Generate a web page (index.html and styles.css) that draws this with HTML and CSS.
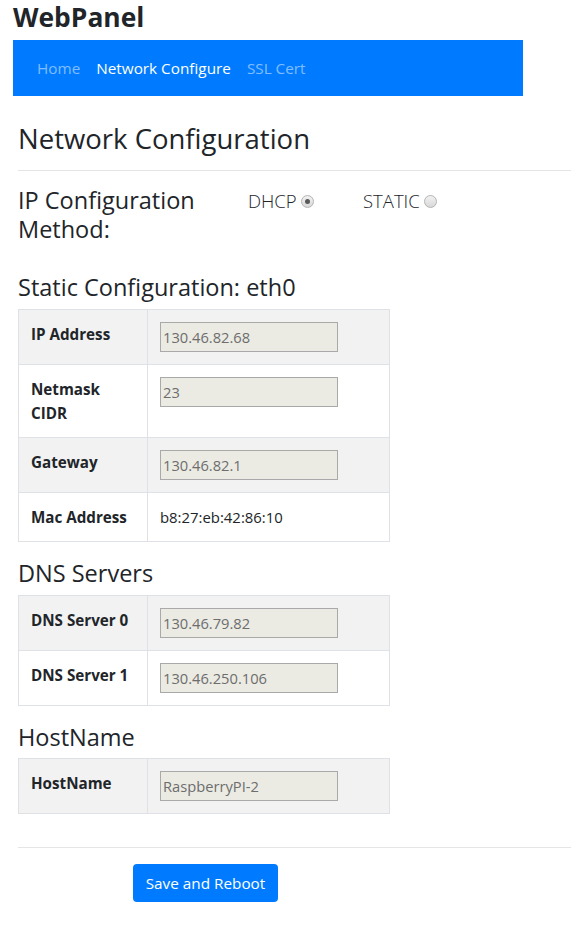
FILE: index.html
```html
<!DOCTYPE html>
<html lang="en">
<head>
<meta charset="utf-8">
<title>WebPanel - Network Configure</title>
<link rel="stylesheet" href="styles.css">
</head>
<body>
<h1 class="brand">WebPanel</h1>
<nav class="navbar">
  <a class="nav-link" href="#">Home</a>
  <a class="nav-link active" href="#">Network Configure</a>
  <a class="nav-link" href="#">SSL Cert</a>
</nav>
<main class="main">
  <h2 class="page-title">Network Configuration</h2>
  <hr class="rule">
  <div class="method-row">
    <h3 class="method-title">IP Configuration Method:</h3>
    <label class="method-option">DHCP <input class="radio" type="radio" name="method" checked></label>
    <label class="method-option">STATIC <input class="radio" type="radio" name="method"></label>
  </div>

  <h3 class="section-title">Static Configuration: eth0</h3>
  <table class="cfg-table">
    <tr class="odd"><th>IP Address</th><td><input class="field" type="text" value="130.46.82.68" disabled></td></tr>
    <tr><th>Netmask CIDR</th><td><input class="field" type="text" value="23" disabled></td></tr>
    <tr class="odd"><th>Gateway</th><td><input class="field" type="text" value="130.46.82.1" disabled></td></tr>
    <tr><th>Mac Address</th><td class="plain">b8:27:eb:42:86:10</td></tr>
  </table>

  <h3 class="section-title">DNS Servers</h3>
  <table class="cfg-table">
    <tr class="odd"><th>DNS Server 0</th><td><input class="field" type="text" value="130.46.79.82" disabled></td></tr>
    <tr><th>DNS Server 1</th><td><input class="field" type="text" value="130.46.250.106" disabled></td></tr>
  </table>

  <h3 class="section-title">HostName</h3>
  <table class="cfg-table">
    <tr class="odd"><th>HostName</th><td><input class="field" type="text" value="RaspberryPI-2" disabled></td></tr>
  </table>

  <hr class="rule rule-bottom">
  <div class="actions">
    <button class="btn-primary" type="button">Save and Reboot</button>
  </div>
</main>
</body>
</html>
```
FILE: styles.css
```css
html, body {
  margin: 0;
  padding: 0;
  background: #fff;
}
body {
  font-family: "Open Sans", "Noto Sans", sans-serif;
  color: #212529;
  font-size: 15.2px;
  line-height: 24px;
}
.brand {
  margin: 0;
  padding-left: 13px;
  font-size: 26.4px;
  line-height: 34px;
  font-weight: 700;
}
.navbar {
  margin: 6px 0 0 13px;
  width: 510px;
  height: 56px;
  box-sizing: border-box;
  padding: 0 16px;
  background: #007bff;
  display: flex;
  align-items: center;
}
.nav-link {
  padding: 0 8px;
  color: rgba(255, 255, 255, 0.5);
  text-decoration: none;
  font-size: 15.3px;
  line-height: 24px;
}
.nav-link.active {
  color: #fff;
}
.main {
  padding-left: 18px;
}
.page-title {
  margin: 26px 0 0;
  font-size: 27.5px;
  line-height: 34px;
  font-weight: 500;
}
.rule {
  border: 0;
  border-top: 1px solid rgba(0, 0, 0, 0.1);
  margin: 14px 0 15px;
}
.method-row {
  display: flex;
  align-items: flex-start;
  margin-bottom: 30px;
}
.method-title {
  margin: 0;
  width: 215px;
  margin-right: 15px;
  font-size: 23.5px;
  line-height: 28.5px;
  font-weight: 500;
}
.method-option {
  width: 115px;
  display: flex;
  align-items: center;
  gap: 4px;
  font-size: 18.5px;
  font-weight: 300;
  line-height: 28px;
  margin-top: 1px;
}
.radio {
  -webkit-appearance: none;
  appearance: none;
  margin: 0;
  width: 13px;
  height: 13px;
  border-radius: 50%;
  border: 1px solid #b4b4b4;
  background: linear-gradient(#f2f2f2, #d8d8d8);
  box-sizing: border-box;
  position: relative;
}
.radio:checked::after {
  content: "";
  position: absolute;
  left: 3px;
  top: 3px;
  width: 5px;
  height: 5px;
  border-radius: 50%;
  background: #595959;
}
.section-title {
  margin: 0 0 7px;
  font-size: 23.5px;
  line-height: 28.8px;
  font-weight: 500;
}
.cfg-table {
  border-collapse: collapse;
  table-layout: fixed;
  width: 372px;
  margin-bottom: 17px;
}
.cfg-table th,
.cfg-table td {
  border: 1px solid #dee2e6;
  padding: 12px;
  vertical-align: top;
  text-align: left;
  line-height: 24px;
}
.cfg-table th {
  width: 104px;
  font-weight: 700;
}
.cfg-table tr.odd {
  background: #f2f2f2;
}
.field {
  display: block;
  box-sizing: border-box;
  width: 178px;
  height: 30px;
  margin: 0;
  padding: 1px 2px;
  border: 1px solid #a9a9a9;
  background: #ebebe4;
  color: #6d6d6d;
  font-family: "Open Sans", "Noto Sans", sans-serif;
  font-size: 14.7px;
}
.plain {
  font-size: 14.9px;
}
.rule-bottom {
  margin: 33px 0 16px;
}
.actions {
  padding-left: 115px;
}
.btn-primary {
  width: 145px;
  height: 38px;
  border: 0;
  border-radius: 4px;
  background: #007bff;
  color: #fff;
  font-family: "Open Sans", "Noto Sans", sans-serif;
  font-size: 15.3px;
  padding: 0;
}
```
